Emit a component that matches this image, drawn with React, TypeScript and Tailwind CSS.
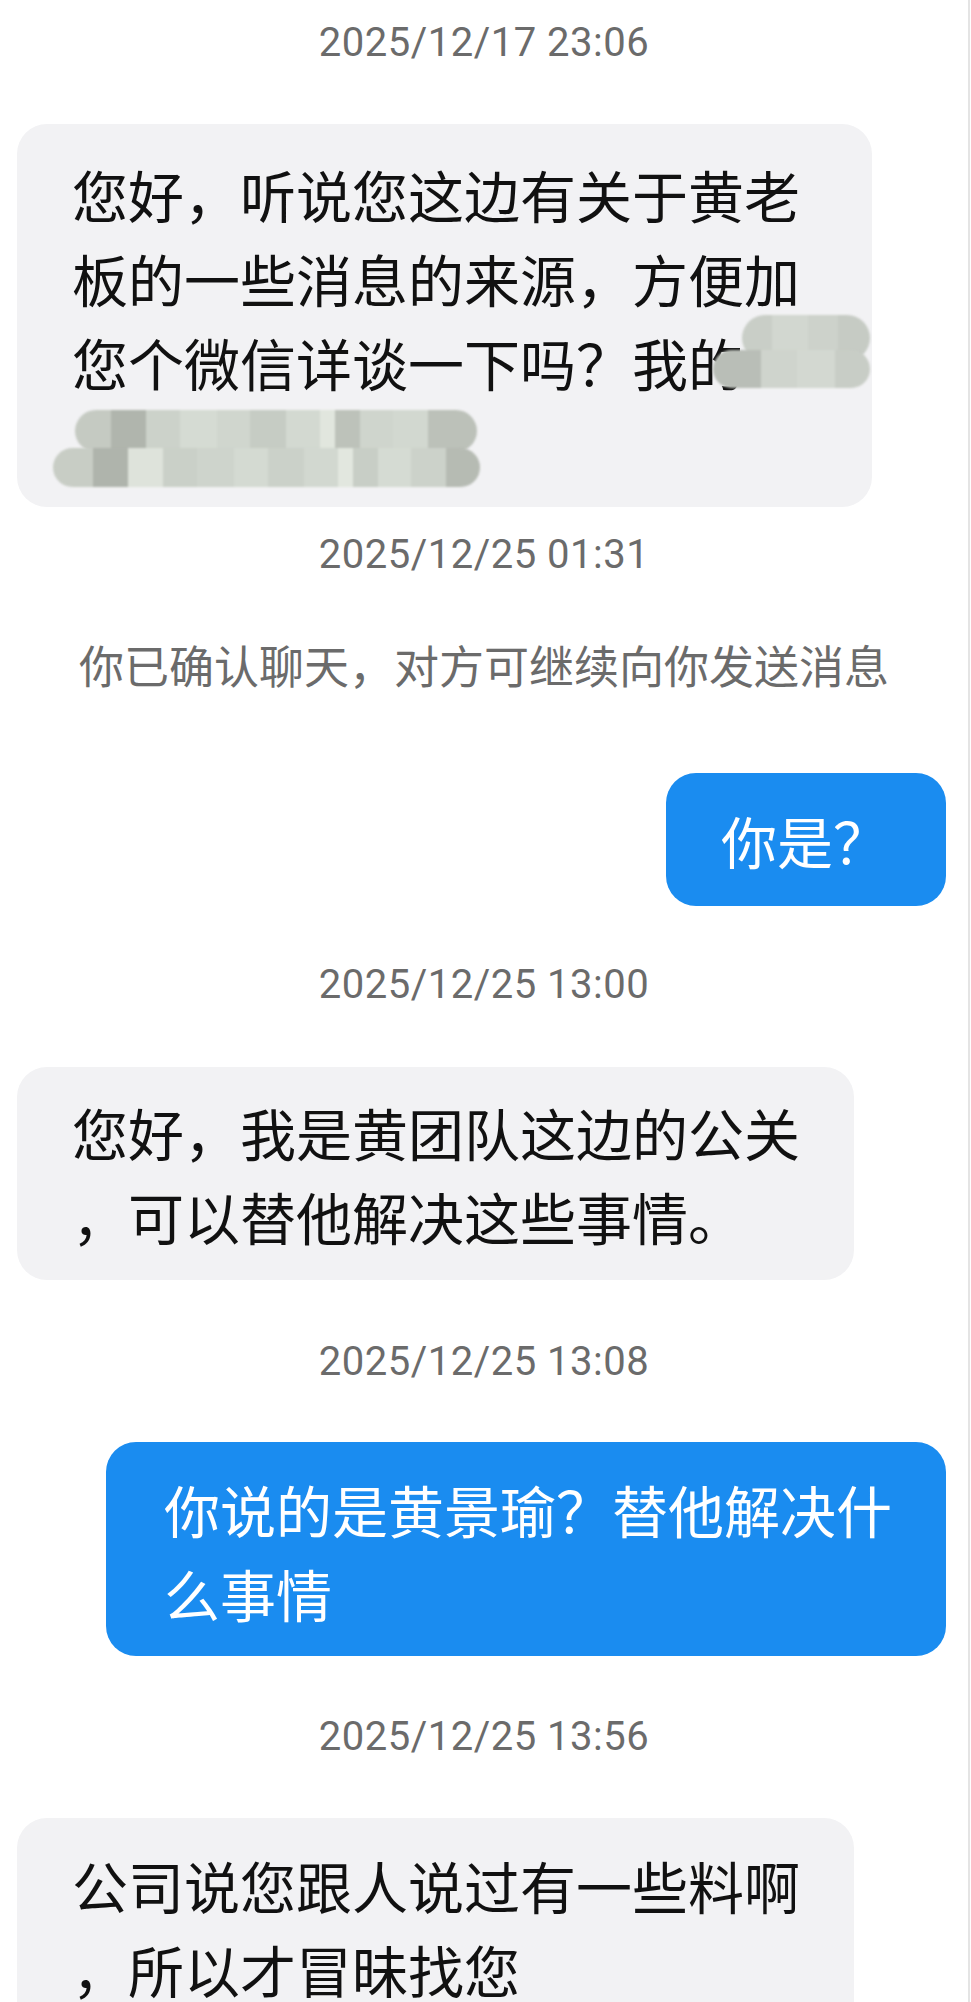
import React from 'react';

type Cell = { w: number; c: string };

// mosaic strips that cover the blurred-out contact info
const blobA: { top: number; left: number; h: number; cells: Cell[] }[] = [
  { top: 191, left: 725, h: 46, cells: [{ w: 30, c: '#c9cec7' }, { w: 36, c: '#d2d7d0' }, { w: 30, c: '#cdd2cb' }, { w: 32, c: '#c6cbc4' }] },
  { top: 226, left: 696, h: 38, cells: [{ w: 48, c: '#b9beb7' }, { w: 36, c: '#cfd4cd' }, { w: 38, c: '#d3d8d1' }, { w: 35, c: '#c8cdc6' }] },
];

const blobB: { top: number; left: number; h: number; cells: Cell[] }[] = [
  {
    top: 286,
    left: 58,
    h: 42,
    cells: [
      { w: 36, c: '#c5cac2' },
      { w: 35, c: '#b0b5ad' },
      { w: 34, c: '#ccd2ca' },
      { w: 37, c: '#d5dbd3' },
      { w: 33, c: '#d0d6ce' },
      { w: 36, c: '#c6ccc4' },
      { w: 34, c: '#d3d9d1' },
      { w: 15, c: '#e1e6de' },
      { w: 25, c: '#bdc2ba' },
      { w: 33, c: '#cfd5cd' },
      { w: 35, c: '#d2d8d0' },
      { w: 49, c: '#bcc1b9' },
    ],
  },
  {
    top: 324,
    left: 36,
    h: 39,
    cells: [
      { w: 40, c: '#c8cdc5' },
      { w: 35, c: '#afb4ac' },
      { w: 35, c: '#dee3db' },
      { w: 34, c: '#cad0c8' },
      { w: 37, c: '#ced4cc' },
      { w: 34, c: '#d4dad2' },
      { w: 36, c: '#cbd1c9' },
      { w: 34, c: '#d2d8d0' },
      { w: 15, c: '#e2e7df' },
      { w: 25, c: '#c8cec6' },
      { w: 33, c: '#d5dbd3' },
      { w: 35, c: '#ccd2ca' },
      { w: 34, c: '#b6bbb3' },
    ],
  },
];

const Stamp: React.FC<{ children: React.ReactNode; className?: string }> = ({ children, className = '' }) => (
  <div
    className={`h-[40px] text-center font-['Roboto','Liberation_Sans',sans-serif] text-[40px] leading-[40px] tracking-[0.5px] text-[#6b6b6b] ${className}`}
  >
    {children}
  </div>
);

const Lines: React.FC<{ lines: string[] }> = ({ lines }) => (
  <>
    {lines.map((l, i) => (
      <div key={i} className="whitespace-nowrap">
        {l}
      </div>
    ))}
  </>
);

const Mosaic: React.FC<{ parts: typeof blobA }> = ({ parts }) => (
  <>
    {parts.map((p, i) => (
      <div
        key={i}
        className="absolute flex overflow-hidden rounded-full blur-[1px]"
        style={{ top: p.top, left: p.left, height: p.h }}
      >
        {p.cells.map((c, j) => (
          <div key={j} className="h-full" style={{ width: c.w, background: c.c }} />
        ))}
      </div>
    ))}
  </>
);

export default function App() {
  return (
    <div className="flex h-[2002px] w-[971px] overflow-hidden bg-white">
      <div className="flex w-[968px] flex-col font-['Noto_Sans_CJK_SC','Noto_Sans',sans-serif] text-[56px] leading-[84px]">
        <Stamp className="mt-[23px]">2025/12/17 23:06</Stamp>

        <div className="relative ml-[17px] mt-[61px] w-[855px] rounded-[30px] bg-[#f2f2f4] pb-[19px] pl-[55px] pt-[28px] text-[#111111]">
          <Lines lines={['您好，听说您这边有关于黄老', '板的一些消息的来源，方便加', '您个微信详谈一下吗？我的', '\u00a0']} />
          <Mosaic parts={blobA} />
          <Mosaic parts={blobB} />
        </div>

        <Stamp className="mt-[28px]">2025/12/25 01:31</Stamp>

        <div className="mt-[60px] text-center text-[45px] leading-[60px] text-[#6b6b6b]">
          你已确认聊天，对方可继续向你发送消息
        </div>

        <div className="mr-[22px] mt-[78px] w-[280px] self-end rounded-[30px] bg-[#1a8cf0] pb-[24px] pl-[55px] pt-[25px] text-white">
          你是？
        </div>

        <Stamp className="mt-[59px]">2025/12/25 13:00</Stamp>

        <div className="ml-[17px] mt-[62px] w-[837px] rounded-[30px] bg-[#f2f2f4] pb-[22px] pl-[55px] pt-[23px] text-[#111111]">
          <Lines lines={['您好，我是黄团队这边的公关', '，可以替他解决这些事情。']} />
        </div>

        <Stamp className="mt-[62px]">2025/12/25 13:08</Stamp>

        <div className="mr-[22px] mt-[60px] w-[840px] self-end rounded-[30px] bg-[#1a8cf0] pb-[21px] pl-[58px] pt-[25px] text-white">
          <Lines lines={['你说的是黄景瑜？替他解决什', '么事情']} />
        </div>

        <Stamp className="mt-[61px]">2025/12/25 13:56</Stamp>

        <div className="ml-[17px] mt-[61px] w-[837px] rounded-[30px] bg-[#f2f2f4] pb-[22px] pl-[55px] pt-[25px] text-[#111111]">
          <Lines lines={['公司说您跟人说过有一些料啊', '，所以才冒昧找您']} />
        </div>
      </div>
      <div className="w-[2px] bg-[#e4e4e4]" />
    </div>
  );
}
